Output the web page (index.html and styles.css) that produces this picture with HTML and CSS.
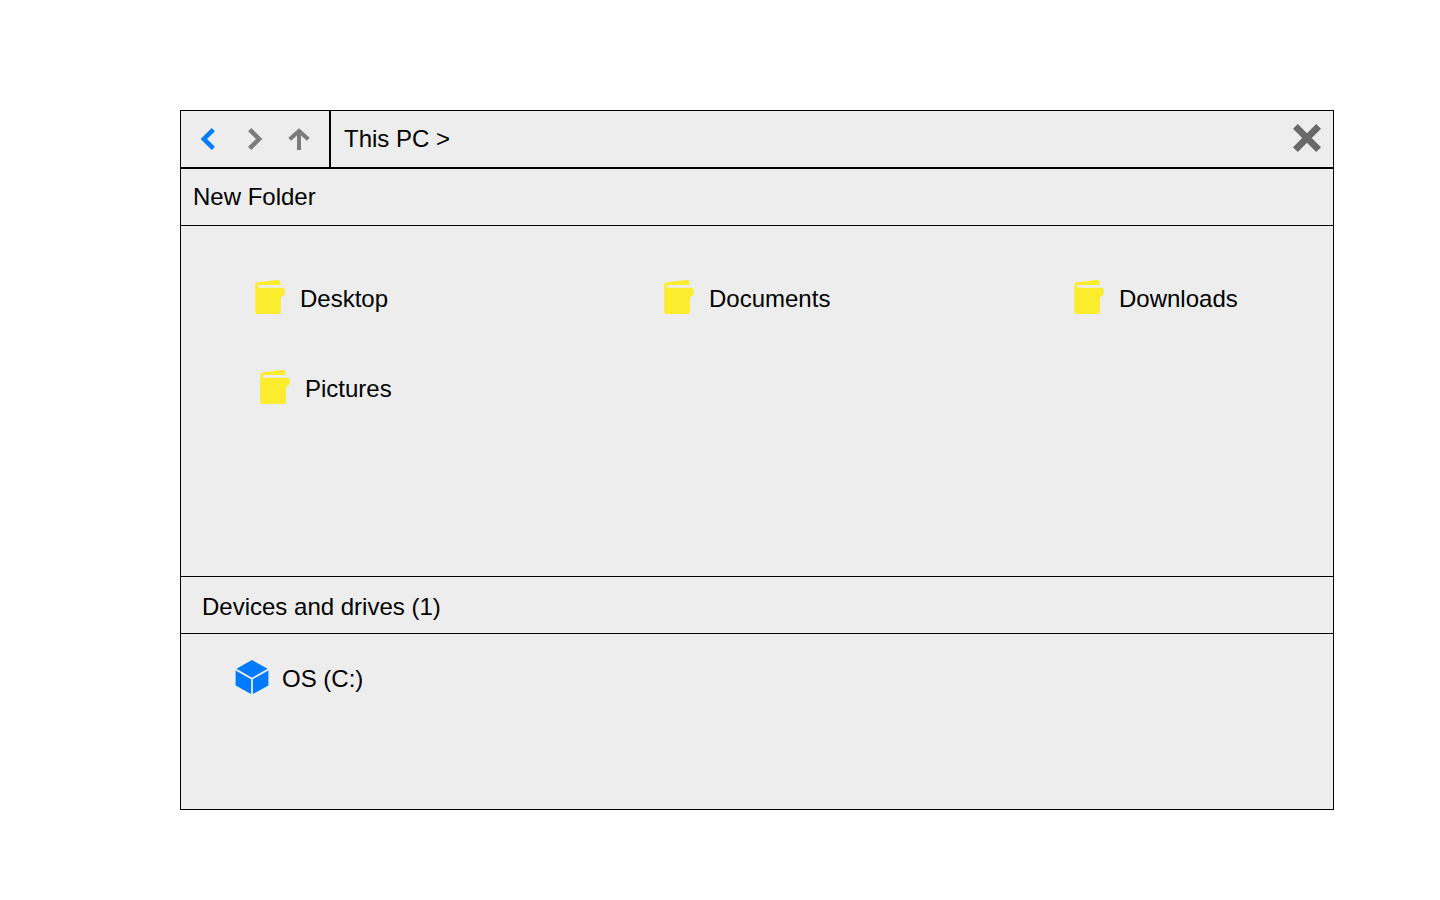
FILE: index.html
```html
<!DOCTYPE html>
<html lang="en">
<head>
<meta charset="utf-8">
<title>This PC</title>
<link rel="stylesheet" href="styles.css">
</head>
<body>
<svg class="symbols" aria-hidden="true">
  <symbol id="folder" viewBox="0 0 30 34">
    <path d="M0.3 7.2V5.2C0.3 3.2 1.4 2.5 3.2 2.2L22.5 0.1C24.3 -0.1 25.2 0.7 25.4 2.5L25.8 5.1H5.2C3.2 5.1 2.6 5.5 2.6 6.4C2.6 7.3 3.2 7.7 4.2 7.7H27.5C29 7.7 29.7 8.4 29.7 10V13.2C29.7 14.8 29 15.4 27.8 16C26.4 16.7 25.9 17.2 25.9 18.6V31.2C25.9 33.2 24.9 34 22.9 34H3.3C1.2 34 0.3 33.2 0.3 31.2Z"/>
  </symbol>
</svg>
<main class="window">
  <header class="titlebar">
    <nav class="nav">
      <svg class="nav-icon back" viewBox="0 0 22 22"><path d="M15.3 1.6L5.9 11L15.3 20.4"/></svg>
      <svg class="nav-icon" viewBox="0 0 22 22"><path d="M5.7 1.6L15.1 11L5.7 20.4"/></svg>
      <svg class="nav-icon" viewBox="0 0 22 22"><path d="M1.7 11.3L11 2.9L20.3 11.3M11 3V22"/></svg>
    </nav>
    <div class="path">This PC &gt;</div>
    <svg class="close" viewBox="0 0 28 28"><path d="M2.4 2.4L25.6 25.6M25.6 2.4L2.4 25.6"/></svg>
  </header>
  <div class="toolbar">New Folder</div>
  <section class="folders">
    <div class="folder"><svg class="folder-icon"><use href="#folder"/></svg><span class="label">Desktop</span></div>
    <div class="folder"><svg class="folder-icon"><use href="#folder"/></svg><span class="label">Documents</span></div>
    <div class="folder"><svg class="folder-icon"><use href="#folder"/></svg><span class="label">Downloads</span></div>
    <div class="folder indented"><svg class="folder-icon"><use href="#folder"/></svg><span class="label">Pictures</span></div>
  </section>
  <div class="drives-heading">Devices and drives (1)</div>
  <section class="drives">
    <div class="drive">
      <svg class="drive-icon" viewBox="0 0 34 34"><path d="M17 0L32.6 8.8L17 17.7L1.4 8.8ZM0.6 10.4L16.1 19.2V34L0.6 25.6ZM33.4 10.4L17.9 19.2V34L33.4 25.6Z"/></svg>
      <span class="label">OS (C:)</span>
    </div>
  </section>
</main>
</body>
</html>
```
FILE: styles.css
```css
* { box-sizing: border-box; }
body {
  margin: 0;
  background: #fff;
  color: #000;
  font: 24px/28px "Liberation Sans", Arial, sans-serif;
}
svg { display: block; flex: none; }
.symbols { display: none; }
.window {
  width: 1154px;
  height: 700px;
  margin: 110px 0 0 180px;
  display: flex;
  flex-direction: column;
  border: 1px solid #000;
  background: #ededed;
}
.titlebar {
  height: 58px;
  display: flex;
  align-items: center;
  border-bottom: 2px solid #000;
}
.nav {
  width: 150px;
  height: 100%;
  display: flex;
  align-items: center;
  gap: 23px;
  padding-left: 17px;
  border-right: 2px solid #000;
}
.nav-icon {
  width: 22px;
  height: 22px;
  fill: none;
  stroke: #7b7b7b;
  stroke-width: 4.5;
}
.nav-icon:nth-child(2) { margin-left: 1px; margin-right: -1px; }
.nav-icon:nth-child(3) { stroke-width: 4; }
.back { stroke: #007bff; }
.path { flex: 1; padding-left: 13px; }
.close {
  width: 28px;
  height: 28px;
  margin: -2px 12px 0 0;
  stroke: #696969;
  stroke-width: 6.8;
}
.toolbar {
  height: 57px;
  padding: 14px 12px;
  border-bottom: 1px solid #000;
}
.folders {
  height: 351px;
  display: grid;
  grid-template-columns: 409px 410px auto;
  grid-auto-rows: 34px;
  row-gap: 56px;
  padding: 54px 0 0 74px;
  border-bottom: 1px solid #000;
}
.folder, .drive { display: flex; align-items: center; }
.folder { gap: 15px; }
.folder .label { padding-top: 4px; }
.indented { padding-left: 5px; }
.folder-icon { width: 30px; height: 34px; fill: #fbed2d; }
.drives-heading {
  height: 57px;
  padding: 16px 21px;
  border-bottom: 1px solid #000;
}
.drives { padding: 26px 54px; }
.drive { gap: 13px; }
.drive .label { padding-top: 4px; }
.drive-icon { width: 34px; height: 34px; fill: #007bff; }
```
